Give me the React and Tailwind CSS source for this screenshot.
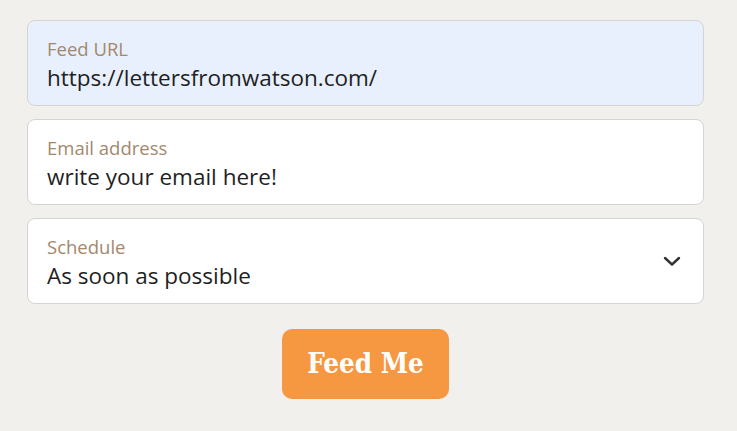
export default function App() {
  const field = "flex h-[86px] rounded-[8px] border border-[#d4d4d4] px-[19px] pt-[4px]";
  const label = "text-[18.5px] leading-[24px] text-[#a3886d]";
  const value = "text-[22.5px] leading-[32px] text-[#1f1f1f] mt-[1px]";
  return (
    <div className="min-h-[431px] w-[737px] bg-[#f1f0ec] pt-[20px] pl-[27px] pr-[33px]" style={{ fontFamily: '"Open Sans", "Noto Sans", sans-serif' }}>
      <div className="flex flex-col gap-[13px]">
        <div className={field + " flex-col justify-center bg-[#e8f0fe]"}>
          <div className={label + " text-[#8f7d6c]"}>Feed URL</div>
          <div className={value}>https://lettersfromwatson.com/</div>
        </div>
        <div className={field + " flex-col justify-center bg-white"}>
          <div className={label}>Email address</div>
          <div className={value}>write your email here!</div>
        </div>
        <div className={field + " bg-white flex-row items-center justify-between"}>
          <div className="flex flex-col">
            <div className={label}>Schedule</div>
            <div className={value}>As soon as possible</div>
          </div>
          <svg width="18" height="12" viewBox="0 0 18 12" className="mr-[3px] -mt-[5px]">
            <path d="M2 3 L9 9.5 L16 3" fill="none" stroke="#333" strokeWidth="2.4" strokeLinecap="round" strokeLinejoin="round" />
          </svg>
        </div>
      </div>
      <div className="flex justify-center mt-[25px]">
        <button className="w-[167px] h-[70px] shrink-0 rounded-[10px] bg-[#f69741] text-white text-[27.5px] font-bold" style={{ fontFamily: '"DejaVu Serif Condensed", "DejaVu Serif", serif' }}>
          Feed Me
        </button>
      </div>
    </div>
  );
}
